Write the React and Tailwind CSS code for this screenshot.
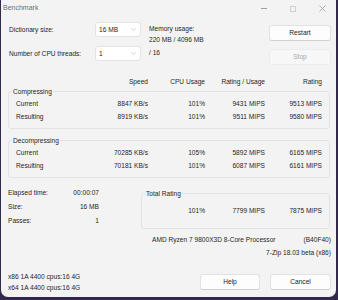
import React from 'react';
import { ChevronDown } from 'lucide-react';

const font = { fontFamily: '"Liberation Sans", Arial, sans-serif' };

function Combo({ value }) {
    return (
        <div className="w-[46px] h-[15px] bg-white border border-[#e3e3e3] rounded-[3px] flex items-center justify-between pl-[3px] pr-[3px]">
            <span>{value}</span>
            <ChevronDown size={7} strokeWidth={1.4} className="text-[#8a8a8a]" />
        </div>
    );
}

function Btn({ children, disabled, className = '' }) {
    return (
        <div
            className={`h-[16px] rounded-[3px] border flex items-center justify-center ${
                disabled
                    ? 'bg-[#f7f7f7] border-[#ececec] text-[#a8a8a8]'
                    : 'bg-[#fdfdfd] border-[#e2e2e2] border-b-[#d0d0d0] text-[#222]'
            } ${className}`}
        >
            {children}
        </div>
    );
}

function Row({ label, speed, cpu, rpu, rating, lead = 'pl-[7px]', labelW = 'w-[92px]' }) {
    return (
        <div className={`flex items-center h-[13px] ${lead}`}>
            <div className={labelW}>{label}</div>
            <div className="w-[40px] text-right">{speed}</div>
            <div className="w-[57px] text-right">{cpu}</div>
            <div className="w-[60px] text-right">{rpu}</div>
            <div className="w-[57px] text-right">{rating}</div>
        </div>
    );
}

function Group({ title, children, className = '' }) {
    return (
        <fieldset className={`border border-[#e3e3e3] rounded-[3px] ${className}`}>
            <legend className="ml-[3px] px-[1px] leading-[9px]">{title}</legend>
            {children}
        </fieldset>
    );
}

export default function App() {
    return (
        <div className="w-[338px] h-[300px] bg-[#33294a] pl-[1px]" style={font}>
            <div className="w-[335px] h-[297px] bg-[#f3f3f3] rounded-b-[7px] flex flex-col text-[6.6px] text-[#262626] overflow-hidden">
                {/* title bar */}
                <div className="h-[17px] flex items-center relative">
                    <span className="pl-[2px] text-[7px] text-[#6e6e6e]">Benchmark</span>
                    <div className="ml-auto flex items-center gap-[23px] pr-[10px] text-[#9a9a9a]">
                        <div className="w-[6px] h-[1px] bg-[#a0a0a0]" />
                        <div className="w-[6px] h-[6px] border border-[#d0d0d0]" />
                        <svg width="7" height="7" viewBox="0 0 7 7">
                            <path d="M0.5 0.5 L6.5 6.5 M6.5 0.5 L0.5 6.5" stroke="#9a9a9a" strokeWidth="0.8" />
                        </svg>
                    </div>
                </div>

                {/* top settings */}
                <div className="flex mt-[5px]">
                    <div className="w-[94px] pl-[8px] flex flex-col gap-[9px]">
                        <div className="h-[15px] flex items-center">Dictionary size:</div>
                        <div className="h-[15px] flex items-center">Number of CPU threads:</div>
                    </div>
                    <div className="flex flex-col gap-[9px]">
                        <Combo value="16 MB" />
                        <Combo value="1" />
                    </div>
                    <div className="flex flex-col pl-[8px]">
                        <div className="h-[13px] flex items-center leading-[9px]">Memory usage:</div>
                        <div className="leading-[9px]">220 MB / 4096 MB</div>
                        <div className="h-[15px] flex items-center mt-[1px]">/ 16</div>
                    </div>
                    <div className="ml-auto mr-[5px] w-[62px] flex flex-col gap-[8px] pt-[3px]">
                        <Btn>Restart</Btn>
                        <Btn disabled>Stop</Btn>
                    </div>
                </div>

                {/* column headers */}
                <div className="mt-[10px]">
                    <Row lead="pl-[15px]" label="" speed="Speed" cpu="CPU Usage" rpu="Rating / Usage" rating="Rating" />
                </div>

                <Group title="Compressing" className="ml-[7px] w-[322px] pb-[5px] -mt-[1px]">
                    <div className="pt-[1px]">
                        <Row label="Current" speed="8847 KB/s" cpu="101%" rpu="9431 MIPS" rating="9513 MIPS" />
                        <Row label="Resulting" speed="8919 KB/s" cpu="101%" rpu="9511 MIPS" rating="9580 MIPS" />
                    </div>
                </Group>

                <Group title="Decompressing" className="ml-[7px] w-[322px] pb-[5px] mt-[7px]">
                    <div className="pt-[1px]">
                        <Row label="Current" speed="70285 KB/s" cpu="105%" rpu="5892 MIPS" rating="6165 MIPS" />
                        <Row label="Resulting" speed="70181 KB/s" cpu="101%" rpu="6087 MIPS" rating="6161 MIPS" />
                    </div>
                </Group>

                {/* totals */}
                <div className="flex mt-[8px]">
                    <div className="ml-[7px] w-[91px] flex flex-col">
                        <div className="h-[14px] flex items-center justify-between"><span>Elapsed time:</span><span>00:00:07</span></div>
                        <div className="h-[14px] flex items-center justify-between"><span>Size:</span><span>16 MB</span></div>
                        <div className="h-[14px] flex items-center justify-between"><span>Passes:</span><span>1</span></div>
                    </div>
                    <Group title="Total Rating" className="ml-auto mr-[6px] w-[189px] h-[40px] mt-[3px]">
                        <div className="flex items-center h-[13px] mt-[6px]">
                            <div className="w-[63px] text-right">101%</div>
                            <div className="w-[60px] text-right">7799 MIPS</div>
                            <div className="w-[57px] text-right">7875 MIPS</div>
                        </div>
                    </Group>
                </div>

                <div className="flex justify-between pl-[151px] pr-[5px] mt-[4px] h-[13px] items-center">
                    <span>AMD Ryzen 7 9800X3D 8-Core Processor</span>
                    <span>(B40F40)</span>
                </div>
                <div className="flex justify-end pr-[5px] h-[14px] items-center">7-Zip 18.03 beta (x86)</div>

                {/* bottom */}
                <div className="flex items-start mt-[11px]">
                    <div className="pl-[7px] flex flex-col leading-[11px]">
                        <span>x86 1A 4400 cpus:16 4G</span>
                        <span>x64 1A 4400 cpus:16 4G</span>
                    </div>
                    <div className="ml-auto mr-[5px] flex gap-[10px] mt-[3px]">
                        <Btn className="w-[60px]">Help</Btn>
                        <Btn className="w-[61px]">Cancel</Btn>
                    </div>
                </div>
            </div>
        </div>
    );
}
